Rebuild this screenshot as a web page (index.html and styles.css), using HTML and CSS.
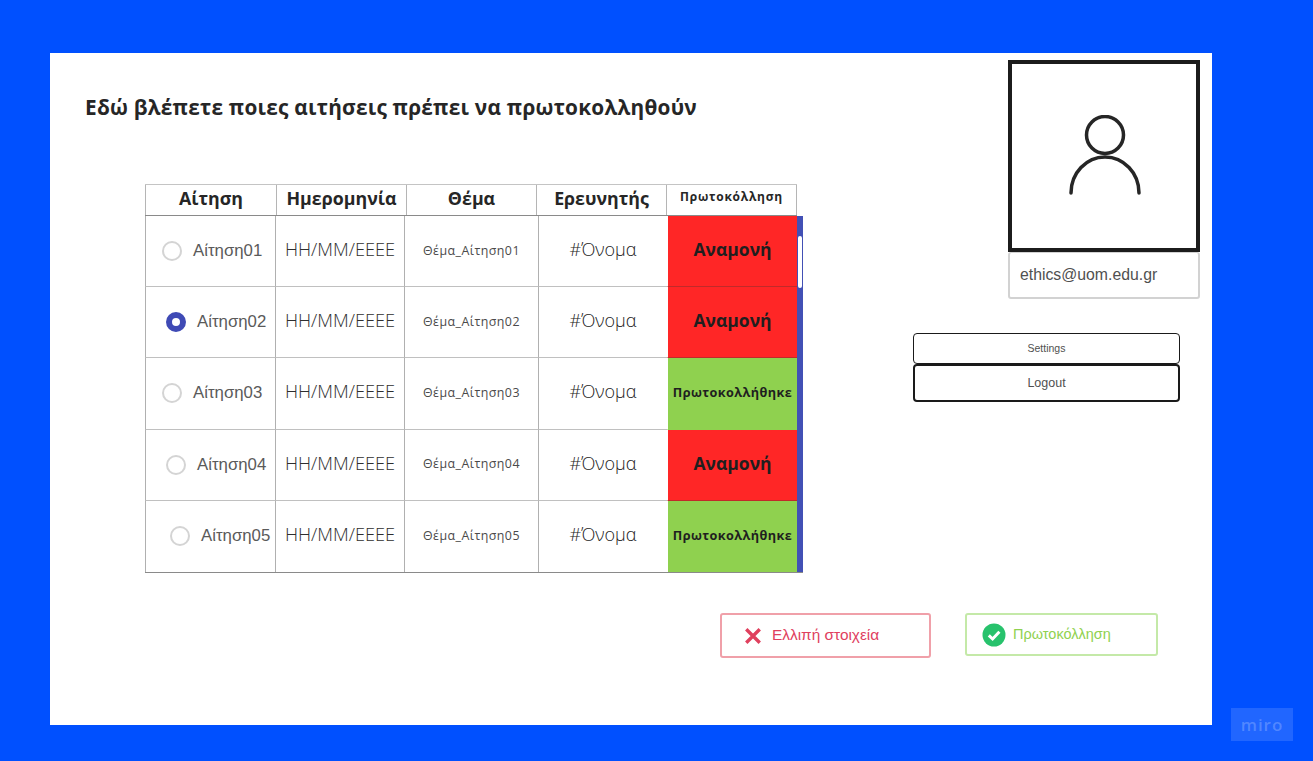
FILE: index.html
```html
<!DOCTYPE html>
<html lang="el">
<head>
<meta charset="utf-8">
<title>Πρωτοκόλληση αιτήσεων</title>
<link rel="stylesheet" href="styles.css">
</head>
<body>
<main class="panel">
  <div class="upper">
    <section class="main">
      <h1 class="title">Εδώ βλέπετε ποιες αιτήσεις πρέπει να πρωτοκολληθούν</h1>
      <div class="table">
        <div class="thead">
          <div class="th">Αίτηση</div>
          <div class="th">Ημερομηνία</div>
          <div class="th">Θέμα</div>
          <div class="th">Ερευνητής</div>
          <div class="th th-small">Πρωτοκόλληση</div>
        </div>
        <div class="tbody">
          <div class="cell cell-radio"><span class="radio"></span><span class="radio-label">Αίτηση01</span></div>
          <div class="cell date">HH/MM/EEEE</div>
          <div class="cell topic">Θέμα_Αίτηση01</div>
          <div class="cell name">#Όνομα</div>
          <div class="cell status wait">Αναμονή</div>

          <div class="cell cell-radio indent-1"><span class="radio radio-on"></span><span class="radio-label">Αίτηση02</span></div>
          <div class="cell date">HH/MM/EEEE</div>
          <div class="cell topic">Θέμα_Αίτηση02</div>
          <div class="cell name">#Όνομα</div>
          <div class="cell status wait">Αναμονή</div>

          <div class="cell cell-radio"><span class="radio"></span><span class="radio-label">Αίτηση03</span></div>
          <div class="cell date">HH/MM/EEEE</div>
          <div class="cell topic">Θέμα_Αίτηση03</div>
          <div class="cell name">#Όνομα</div>
          <div class="cell status done">Πρωτοκολλήθηκε</div>

          <div class="cell cell-radio indent-1"><span class="radio"></span><span class="radio-label">Αίτηση04</span></div>
          <div class="cell date">HH/MM/EEEE</div>
          <div class="cell topic">Θέμα_Αίτηση04</div>
          <div class="cell name">#Όνομα</div>
          <div class="cell status wait">Αναμονή</div>

          <div class="cell cell-radio indent-2"><span class="radio"></span><span class="radio-label">Αίτηση05</span></div>
          <div class="cell date">HH/MM/EEEE</div>
          <div class="cell topic">Θέμα_Αίτηση05</div>
          <div class="cell name">#Όνομα</div>
          <div class="cell status done">Πρωτοκολλήθηκε</div>
          <div class="scrollbar"><div class="thumb"></div></div>
        </div>
      </div>
    </section>
    <aside class="side">
      <div class="avatar">
        <svg class="avatar-icon" viewBox="0 0 80 90" width="80" height="90" aria-hidden="true">
          <circle cx="41" cy="20" r="18.5" fill="none" stroke="#262626" stroke-width="3.5"/>
          <path d="M7 78 A34 36 0 0 1 75 78" fill="none" stroke="#262626" stroke-width="3.5" stroke-linecap="round"/>
        </svg>
      </div>
      <div class="email">ethics@uom.edu.gr</div>
      <div class="side-buttons">
        <button class="btn-outline btn-settings">Settings</button>
        <button class="btn-outline btn-logout">Logout</button>
      </div>
    </aside>
  </div>
  <div class="actions">
    <button class="action action-missing">
      <svg viewBox="0 0 16 16" width="18" height="18" aria-hidden="true"><path d="M2 2 L14 14 M14 2 L2 14" stroke="#e0405e" stroke-width="3" fill="none"/></svg>
      Ελλιπή στοιχεία
    </button>
    <button class="action action-submit">
      <svg viewBox="0 0 24 24" width="24" height="24" aria-hidden="true"><circle cx="12" cy="12" r="11.5" fill="#27c26c"/><path d="M6.8 12.4 L10.6 16 L17.4 8.8" stroke="#fff" stroke-width="3" fill="none"/></svg>
      Πρωτοκόλληση
    </button>
  </div>
</main>
<div class="miro">miro</div>
</body>
</html>
```
FILE: styles.css
```css
* { box-sizing: border-box; }
html, body { margin: 0; height: 100%; }
body {
  background: #0050ff;
  padding: 53px 101px 36px 50px;
  overflow: hidden;
  font-family: "Open Sans", sans-serif;
}
.panel {
  width: 1162px;
  height: 672px;
  background: #fff;
}
.upper { display: flex; height: 560px; }
.main { width: 863px; padding: 41px 0 0 35px; }
.title {
  margin: 0;
  font-size: 20.8px;
  line-height: 27px;
  font-weight: 700;
  color: #262626;
  letter-spacing: 0.24px;
  white-space: nowrap;
}
.table { margin: 63px 0 0 60px; width: 658px; }
.thead {
  display: grid;
  grid-template-columns: 131px 130px 130px 130px 131px;
  width: 652px;
  height: 32px;
  border-top: 1px solid #c4c4c4;
  border-bottom: 1px solid #8a8a8a;
}
.th {
  display: flex;
  align-items: center;
  justify-content: center;
  padding-bottom: 4px;
  font-size: 17.8px;
  font-weight: 700;
  color: #262626;
  border-left: 1px solid #b5b5b5;
  white-space: nowrap;
}
.th:last-child { border-right: 1px solid #b5b5b5; }
.th-small { font-size: 12px; font-weight: 700; letter-spacing: 0.75px; padding-bottom: 7px; }
.tbody {
  position: relative;
  display: grid;
  grid-template-columns: 130px 129px 134px 129px 130px;
  grid-auto-rows: 71.2px;
  width: 658px;
  padding-right: 6px;
  border-bottom: 1px solid #8a8a8a;
}
.cell {
  display: flex;
  align-items: center;
  justify-content: center;
  border-left: 1px solid #b0b0b0;
  border-bottom: 1px solid #c0c0c0;
  white-space: nowrap;
  color: #333;
  padding-bottom: 4px;
}
.cell:nth-last-child(-n+6) { border-bottom: none; }
.cell-radio { justify-content: flex-start; padding: 0 0 0 16px; gap: 10px; }
.indent-1 { padding-left: 20px; }
.indent-2 { padding-left: 24px; }
.radio {
  width: 20px;
  height: 20px;
  flex: none;
  border-radius: 50%;
  border: 2.5px solid #d4d4d4;
  background: #fff;
}
.radio-on { border: 6px solid #3f4ab5; }
.radio-label {
  font-family: "Liberation Sans", sans-serif;
  font-size: 16.8px;
  color: #5a5a5a;
  padding-left: 1px;
}
.date { font-size: 18.2px; font-weight: 300; color: #2e2e2e; }
.topic { font-size: 12.4px; color: #4a4a4a; letter-spacing: 0.45px; font-weight: 400; padding-bottom: 2px; }
.name { font-size: 18px; font-weight: 300; color: #222; }
.status { font-weight: 700; color: #1f1f1f; }
.status.wait, .status.done { border-left-color: #fff; }
.wait { background: #ff2626; font-size: 17.5px; border-bottom-color: #c02a2a; }
.done { background: #8fd14f; font-size: 12.7px; letter-spacing: 0.4px; border-bottom-color: #8fd14f; padding-bottom: 2px; }
.scrollbar {
  position: absolute;
  top: 0;
  right: 0;
  bottom: 0;
  width: 6px;
  background: #4250b5;
}
.thumb {
  width: 4px;
  height: 52px;
  margin: 20px 0 0 1px;
  background: #fff;
  border-radius: 2px;
}
.side { width: 299px; padding-top: 7px; }
.avatar {
  width: 192px;
  height: 192px;
  margin-left: 95px;
  border: 4px solid #1c1c1c;
  display: flex;
  justify-content: center;
  padding-top: 51px;
}
.avatar-icon { display: block; }
.email {
  width: 192px;
  height: 47px;
  margin-left: 95px;
  padding-left: 10px;
  display: flex;
  align-items: center;
  border: 2px solid #d2d2d2;
  border-top-width: 1px;
  border-radius: 3px;
  font-family: "Liberation Sans", sans-serif;
  font-size: 15.8px;
  color: #505050;
}
.side-buttons { margin-top: 34px; width: 267px; display: flex; flex-direction: column; }
.btn-outline {
  display: block;
  width: 267px;
  background: #fff;
  border: 2px solid #1a1a1a;
  border-radius: 4px;
  font-family: "Liberation Sans", sans-serif;
  color: #505050;
  padding: 0;
}
.btn-settings { height: 31px; font-size: 10.5px; border-width: 1.5px; padding-bottom: 1px; }
.btn-logout { height: 38px; font-size: 12.5px; }
.actions { display: flex; align-items: flex-start; padding-left: 670px; }
.action {
  display: flex;
  align-items: center;
  background: #fff;
  border-radius: 3px;
  font-family: "Liberation Sans", sans-serif;
  padding: 0 0 2px;
}
.action-missing {
  width: 211px;
  height: 45px;
  padding-left: 22px;
  gap: 10px;
  border: 2px solid #f0a0a9;
  color: #e0405e;
  font-size: 15.4px;
}
.action-submit {
  width: 193px;
  height: 43px;
  margin-left: 34px;
  padding-left: 15px;
  gap: 7px;
  border: 2px solid #c4e9a8;
  color: #8fd14f;
  font-size: 14.5px;
}
.action svg { margin-top: 2px; }
.miro {
  position: absolute;
  left: 1231px;
  top: 708px;
  width: 62px;
  height: 33px;
  display: flex;
  align-items: center;
  justify-content: center;
  background: rgba(255, 255, 255, 0.13);
  color: rgba(255, 255, 255, 0.22);
  font-size: 17px;
  font-weight: 600;
  letter-spacing: 1px;
}
```
